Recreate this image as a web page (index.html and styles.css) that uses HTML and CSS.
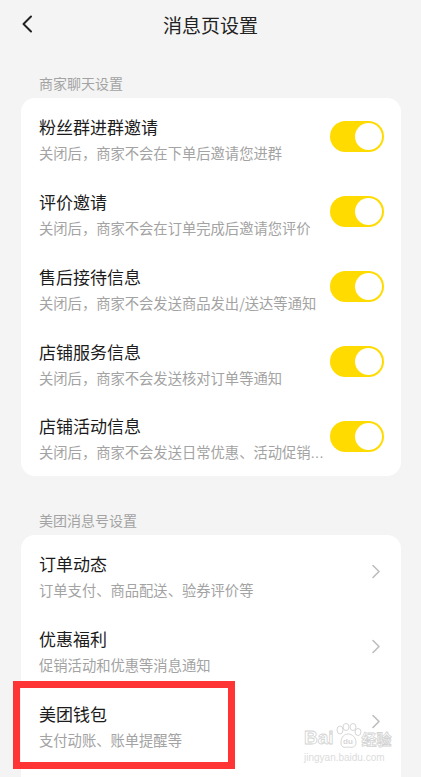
FILE: index.html
```html
<!DOCTYPE html>
<html lang="zh-CN">
<head>
  <meta charset="UTF-8" />
  <meta name="viewport" content="width=device-width, initial-scale=1.0"/>
  <title>消息页设置</title>
  <link rel="stylesheet" href="styles.css">
</head>
<body>
  <header class="top-bar">
    <a class="back" href="#">
      <svg width="12" height="18" viewBox="0 0 12 18"><path d="M10 1.5 L2.5 9 L10 16.5" fill="none" stroke="#222" stroke-width="2" stroke-linecap="round" stroke-linejoin="round"/></svg>
    </a>
    <h1>消息页设置</h1>
  </header>

  <main>
    <div class="section-label">商家聊天设置</div>
    <section class="card">
      <div class="row">
        <div class="text">
          <div class="title">粉丝群进群邀请</div>
          <div class="desc">关闭后，商家不会在下单后邀请您进群</div>
        </div>
        <span class="switch on"><span class="knob"></span></span>
      </div>
      <div class="row">
        <div class="text">
          <div class="title">评价邀请</div>
          <div class="desc">关闭后，商家不会在订单完成后邀请您评价</div>
        </div>
        <span class="switch on"><span class="knob"></span></span>
      </div>
      <div class="row">
        <div class="text">
          <div class="title">售后接待信息</div>
          <div class="desc">关闭后，商家不会发送商品发出/送达等通知</div>
        </div>
        <span class="switch on"><span class="knob"></span></span>
      </div>
      <div class="row">
        <div class="text">
          <div class="title">店铺服务信息</div>
          <div class="desc">关闭后，商家不会发送核对订单等通知</div>
        </div>
        <span class="switch on"><span class="knob"></span></span>
      </div>
      <div class="row">
        <div class="text">
          <div class="title">店铺活动信息</div>
          <div class="desc">关闭后，商家不会发送日常优惠、活动促销<span class="dots">...</span></div>
        </div>
        <span class="switch on"><span class="knob"></span></span>
      </div>
    </section>

    <div class="section-label second">美团消息号设置</div>
    <section class="card last">
      <div class="row">
        <div class="text">
          <div class="title">订单动态</div>
          <div class="desc">订单支付、商品配送、验券评价等</div>
        </div>
        <svg class="arrow" width="10" height="15" viewBox="0 0 10 15"><path d="M2 1.5 L8 7.5 L2 13.5" fill="none" stroke="#bdbdbd" stroke-width="1.6" stroke-linecap="round" stroke-linejoin="round"/></svg>
      </div>
      <div class="row">
        <div class="text">
          <div class="title">优惠福利</div>
          <div class="desc">促销活动和优惠等消息通知</div>
        </div>
        <svg class="arrow" width="10" height="15" viewBox="0 0 10 15"><path d="M2 1.5 L8 7.5 L2 13.5" fill="none" stroke="#bdbdbd" stroke-width="1.6" stroke-linecap="round" stroke-linejoin="round"/></svg>
      </div>
      <div class="row">
        <div class="text">
          <div class="title">美团钱包</div>
          <div class="desc">支付动账、账单提醒等</div>
        </div>
        <svg class="arrow" width="10" height="15" viewBox="0 0 10 15"><path d="M2 1.5 L8 7.5 L2 13.5" fill="none" stroke="#bdbdbd" stroke-width="1.6" stroke-linecap="round" stroke-linejoin="round"/></svg>
      </div>
    </section>
  </main>

  <!-- annotation and watermark over the screenshot -->
  <div class="highlight"></div>
  <div class="watermark">
    <div class="wm-logo">
      <span>Bai</span>
      <svg width="28" height="26" viewBox="0 0 28 26">
        <g fill="none" stroke="#d6d6d6" stroke-width="1">
          <ellipse cx="6" cy="7" rx="3" ry="4"/>
          <ellipse cx="12" cy="4" rx="3" ry="3.5"/>
          <ellipse cx="19" cy="4" rx="3" ry="3.5"/>
          <ellipse cx="24" cy="9" rx="3" ry="3.5"/>
          <path d="M7 20 C7 13 11 11 14 11 C18 11 22 14 22 20 C22 24 18 25 14 24 C10 25 7 24 7 20 Z"/>
        </g>
        <text x="9" y="21" font-size="8" fill="#d6d6d6" font-family="Liberation Sans, sans-serif">du</text>
      </svg>
      <span>经验</span>
    </div>
    <div class="wm-url">jingyan.baidu.com</div>
  </div>
</body>
</html>
```

FILE: styles.css
```css
body {
  margin: 0;
  background-color: #f4f4f4;
  font-family: "Noto Sans CJK SC", "Noto Sans", sans-serif;
  color: #1c1c1c;
  position: relative;
  min-height: 777px;
  overflow: hidden;
}

.top-bar {
  height: 50px;
  display: flex;
  align-items: center;
  justify-content: center;
  position: relative;
}

.top-bar h1 {
  margin: 0;
  font-size: 19px;
  font-weight: 400;
  color: #222;
  line-height: 26px;
}

.back {
  position: absolute;
  left: 21px;
  top: 15px;
  display: flex;
}

main {
  padding: 0 20px 0 21px;
}

.section-label {
  font-size: 14px;
  line-height: 20px;
  color: #a3a3a3;
  padding: 23px 0 5px 18px;
}

.section-label.second {
  padding-top: 34px;
}

.card {
  background-color: #ffffff;
  border-radius: 14px;
  padding-bottom: 3px;
}

.card.last {
  padding-bottom: 30px;
}

.row {
  display: flex;
  align-items: center;
  height: 75px;
  box-sizing: border-box;
  padding: 17px 17px 11px 18px;
}

.text {
  flex: 1;
  min-width: 0;
}

.title {
  font-size: 17px;
  line-height: 24px;
}

.desc {
  margin-top: 4px;
  font-size: 14.3px;
  line-height: 20px;
  color: #a3a3a3;
  white-space: nowrap;
}

.dots {
  font-family: "Liberation Sans", sans-serif;
  letter-spacing: 0.5px;
}

.switch {
  flex: none;
  width: 54px;
  height: 31px;
  border-radius: 16px;
  background-color: #ffdb00;
  box-sizing: border-box;
  padding: 2px;
  display: flex;
  justify-content: flex-end;
  margin-left: 6px;
  margin-top: -4px;
}

.knob {
  width: 27px;
  height: 27px;
  border-radius: 50%;
  background-color: #ffffff;
}

.arrow {
  flex: none;
  margin-right: 3px;
  margin-top: -8px;
}

.highlight {
  position: absolute;
  left: 13px;
  top: 681px;
  width: 222px;
  height: 88px;
  box-sizing: border-box;
  border: 7px solid #ff3434;
}

.watermark {
  position: absolute;
  left: 304px;
  top: 722px;
  width: 90px;
  color: transparent;
  -webkit-text-stroke: 0.8px #d2d2d2;
  font-family: "Liberation Sans", sans-serif;
}

.wm-logo {
  display: flex;
  align-items: flex-end;
  height: 27px;
  font-size: 19px;
  font-weight: 700;
  line-height: 22px;
}

.wm-logo span:last-child {
  font-family: "Noto Sans CJK SC", sans-serif;
  font-size: 15px;
  line-height: 20px;
}

.wm-url {
  font-size: 10px;
  line-height: 14px;
  color: #dcdcdc;
  -webkit-text-stroke: 0;
  margin-top: 2px;
}
```
